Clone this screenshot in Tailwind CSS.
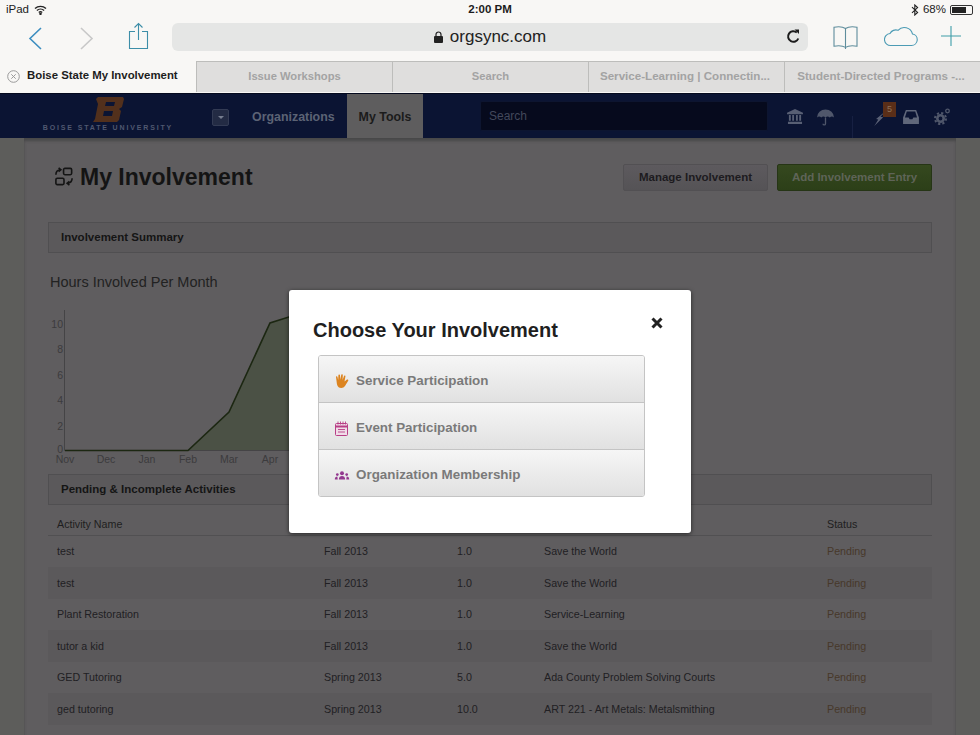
<!DOCTYPE html>
<html lang="en">
<head>
  <meta charset="UTF-8">
  <title>Boise State My Involvement</title>
  <script src="https://cdn.jsdelivr.net/npm/@tailwindcss/browser@4"></script>
</head>
<body class="relative w-[980px] h-[735px] overflow-hidden bg-[#5d5d5b] font-['Liberation_Sans',Arial,sans-serif]">

  <!-- status bar -->
  <div class="h-[20px] bg-[#f8f7f5] flex items-center justify-between px-[6px] text-[11.5px] text-[#1c1c1c]">
    <div class="flex items-center gap-[5px] w-[200px]">
      <span>iPad</span>
      <svg width="13" height="10" viewBox="0 0 13 10" fill="none" stroke="#222" stroke-width="1.4"><path d="M1 3.6a8 8 0 0 1 11 0M2.9 5.6a5.2 5.2 0 0 1 7.2 0M4.8 7.4a2.5 2.5 0 0 1 3.4 0"/><circle cx="6.5" cy="8.8" r=".6" fill="#222"/></svg>
    </div>
    <span class="font-semibold">2:00 PM</span>
    <div class="flex items-center justify-end gap-[4px] w-[200px]">
      <svg width="8" height="12" viewBox="0 0 8 12" fill="none" stroke="#222" stroke-width="1.1"><path d="M1 3.2 6.6 8.4 3.8 11V1l2.8 2.6L1 8.8"/></svg>
      <span>68%</span>
      <div class="w-[23px] h-[10px] rounded-[2px] border border-[#333] p-[1px] mr-[1px]"><div class="w-[14px] h-full bg-[#222]"></div></div>
    </div>
  </div>

  <!-- safari toolbar -->
  <div class="h-[41px] bg-[#f8f7f5] flex items-center relative">
    <div class="w-[172px] shrink-0 relative h-full">
      <svg class="absolute left-[27px] top-[6px]" width="16" height="24" viewBox="0 0 16 24" fill="none" stroke="#3d8ec0" stroke-width="1.6"><path d="M14 2 3 12.5 14 23"/></svg>
      <svg class="absolute left-[79px] top-[6px]" width="16" height="24" viewBox="0 0 16 24" fill="none" stroke="#c8c8c8" stroke-width="1.6"><path d="M2 2l11 10.5L2 23"/></svg>
      <svg class="absolute left-[128px] top-[2px]" width="21" height="28" viewBox="0 0 21 28" fill="none" stroke="#3d8ea8" stroke-width="1.1"><path d="M7 9.500H1.500v17h18v-17H14M10.500 18V1.500M6.500 5.500l4-4 4 4"/></svg>
    </div>
    <div class="w-[636px] h-[28px] -mt-[7px] rounded-[6px] bg-[#e5e6e5] flex items-center justify-center relative text-[17px] text-[#222]">
      <svg class="mr-[7px]" width="9" height="12" viewBox="0 0 9 12"><path d="M2 5V3.500a2.500 2.500 0 0 1 5 0V5" fill="none" stroke="#222" stroke-width="1.200"/><rect y="5" width="9" height="7" rx="1" fill="#222"/></svg>
      <span>orgsync.com</span>
      <svg class="absolute right-[7px] top-[6px]" width="15" height="15" viewBox="0 0 15 15" fill="none" stroke="#1c1c1c" stroke-width="2"><path d="M12.300 9.500A5.300 5.300 0 1 1 10.800 3.500"/><path d="M8.500 .5h4.500v4.500z" fill="#1c1c1c" stroke="none"/></svg>
    </div>
    <div class="flex-1 relative h-full">
      <svg class="absolute left-[25px] top-[5px]" width="25" height="25" viewBox="0 0 25 25" fill="none" stroke="#5e8d9c" stroke-width="1.100"><path d="M12.500 3.500C10 1.800 5 1.500 1 2.200v19c4-.6 9-.4 11.500 1.200 2.500-1.600 7.500-1.800 11.500-1.200v-19c-4-.7-9-.4-11.500 1.300zM12.500 3.500V24"/></svg>
      <svg class="absolute left-[76px] top-[5px]" width="34" height="22" viewBox="0 0 34 22" fill="none" stroke="#4c9bb4" stroke-width="1.100"><path d="M8 20.500H7a6 6 0 0 1-1-12 6.500 6.500 0 0 1 8-3.200A8.500 8.500 0 0 1 28.500 9a5.800 5.800 0 0 1-1 11.500z"/></svg>
      <svg class="absolute left-[132px] top-[5px]" width="22" height="22" viewBox="0 0 22 22" fill="none" stroke="#3f9ea8" stroke-width="1.100"><path d="M11 1v20M1 11h20"/></svg>
    </div>
  </div>

  <!-- tab strip -->
  <div class="h-[32px] flex pb-[1px] bg-[#f8f7f5] text-[11.2px] font-semibold text-[#a3a3a3]">
    <div class="w-[196px] pb-[1px] flex items-center pl-[7px] gap-[7px] text-[11.4px] text-[#1d1d1d]">
      <svg width="13" height="13" viewBox="0 0 13 13" fill="none" stroke="#9a9a9a"><circle cx="6.500" cy="6.500" r="5.800"/><path d="M4.300 4.300l4.400 4.400M8.700 4.300l-4.400 4.400"/></svg>
      <span>Boise State My Involvement</span>
    </div>
    <div class="w-[196px] pb-[2px] bg-[#dfdedd] border-t border-l border-[#bdbdbb] flex items-center justify-center">Issue Workshops</div>
    <div class="w-[196px] pb-[2px] bg-[#dfdedd] border-t border-l border-[#bdbdbb] flex items-center justify-center">Search</div>
    <div class="w-[196px] pb-[2px] pr-[3px] text-[11.600px] bg-[#dfdedd] border-t border-l border-[#bdbdbb] flex items-center justify-center">Service-Learning | Connectin...</div>
    <div class="flex-1 pb-[2px] pr-[3px] text-[11.600px] bg-[#dfdedd] border-t border-l border-[#bdbdbb] flex items-center justify-center">Student-Directed Programs -...</div>
  </div>

  <!-- orgsync nav -->
  <div class="h-[45px] bg-[#0b1433] border-t border-[#050a1e] flex items-stretch">
    <div class="w-[212px] shrink-0 flex flex-col items-center pt-[2px] pl-[4px]">
      <svg width="33" height="26" viewBox="0 0 33 26"><path fill-rule="evenodd" fill="#52301c" d="M6 1h25l1 2-2 8-3 2 2 2-2 9-2 2H1l2-3 3-15-2-5zM14 6l-1 4h9l1-4zM12 15l-1 5h9l1-5z"/></svg>
      <span class="text-[7px] font-bold tracking-[1.850px] text-[#505870] whitespace-nowrap mt-[1px]">BOISE STATE UNIVERSITY</span>
    </div>
    <div class="self-center w-[17px] h-[17px] rounded-[2px] bg-[#232b44] border border-[#333b54] flex items-center justify-center mt-[3px]">
      <div class="w-0 h-0 border-x-[3px] border-x-transparent border-t-[3px] border-t-[#777e90]"></div>
    </div>
    <div class="w-[118px] self-center mt-[2px] pl-[23px] text-[12.400px] font-bold text-[#5c6375]">Organizations</div>
    <div class="w-[76px] pt-[2px] bg-[#5e5d5e] flex items-center justify-center text-[12.400px] font-bold text-[#1b1b1b]">My Tools</div>
    <div class="self-center ml-[57px] w-[288px] h-[30px] rounded-[2px] bg-[#060a1d] border border-[#0d1530] text-[12px] text-[#42485b] flex items-center px-[8px]">Search</div>
    <div class="relative flex-1">
      <svg class="absolute left-[19px] top-[15px]" width="16" height="15" viewBox="0 0 17 16" fill="#585f74"><path d="M8.500 0 17 4v1.500H0V4zM2 6.500h2v6H2zM5.500 6.500h2v6h-2zM9.500 6.500h2v6h-2zM13 6.500h2v6h-2zM1 13.500h15V16H1z"/></svg>
      <svg class="absolute left-[49px] top-[15px]" width="17" height="17" viewBox="0 0 18 18" fill="#50576b"><path d="M0 9a9 8.500 0 0 1 18 0c-1.500-1.300-3-1.300-4.500 0-1.500-1.300-3-1.300-4.500 0-1.500-1.300-3-1.300-4.500 0C3 7.700 1.500 7.700 0 9z"/><path d="M8.300 9h1.400v6.500a2 2 0 0 1-4 0h1.400a.6.600 0 0 0 1.200 0z"/></svg>
      <div class="absolute left-[84px] top-[22px] w-px h-[22px] bg-[#172042]"></div>
      <svg class="absolute left-[106px] top-[17px]" width="13" height="15" viewBox="0 0 14 17" fill="#5a6176"><path d="M13 0 7 6.500l3 .5L0 17l4.500-7.500L2 9z"/></svg>
      <div class="absolute left-[115px] top-[8px] w-[13px] h-[15px] bg-[#5a2e18] text-[#8c7056] text-[9px] text-center leading-[15px]">5</div>
      <svg class="absolute left-[135px] top-[16px]" width="16" height="14" viewBox="0 0 17 15" fill="#60677a"><path fill-rule="evenodd" d="M3 0h11l3 8v7H0V8zM4 1.500 2 8h4l1 2h3l1-2h4l-2-6.500z"/></svg>
      <svg class="absolute left-[166px] top-[14px]" width="16" height="17" viewBox="0 0 16 17" fill="none" stroke="#50576b"><circle cx="6.500" cy="10.500" r="3.200" stroke-width="2.600"/><circle cx="6.500" cy="10.500" r="5.500" stroke-width="2" stroke-dasharray="2.200 2.120"/><circle cx="13.500" cy="3" r="1.800" stroke-width="1.300"/></svg>
    </div>
  </div>

  <!-- page under the dimmer -->
  <div class="mx-[24px] h-[597px] bg-[#5f5d5f] shadow-[inset_0_3px_3px_#484849] px-[24px]">
    <div class="h-[84px] flex justify-between pt-[26px]">
      <div class="flex items-start gap-[7px] pl-[7px] text-[23px] leading-[26px] font-bold text-[#141414]">
        <svg class="mt-[3px]" width="18" height="19" viewBox="0 0 20 20" fill="none" stroke="#141414" stroke-width="1.800"><rect x="9.500" y="1" width="9" height="7" rx="1.500"/><rect x="1" y="12" width="9" height="7" rx="1.500"/><path d="M1 8c0-3 1.500-5 4.500-5.500M4 .5l2.500 2L4 4.500M19 12c0 3-1.500 5-4.500 5.500M16 15.500l-2.500 2 2.500 2"/></svg>
        <span>My Involvement</span>
      </div>
      <div class="flex gap-[9px] text-[11.500px] font-bold">
        <div class="w-[145px] h-[27px] rounded-[2px] bg-gradient-to-b from-[#5d5a5e] to-[#555356] border border-[#525053] flex items-center justify-center text-[#1d1b20]">Manage Involvement</div>
        <div class="w-[155px] h-[27px] rounded-[2px] bg-gradient-to-b from-[#35481f] to-[#2c3f18] border border-[#263516] flex items-center justify-center text-[#5f6458]">Add Involvement Entry</div>
      </div>
    </div>

    <div class="h-[31px] pt-[1px] bg-[#5b595b] border border-[#504f51] flex items-center pl-[12px] text-[11.500px] font-bold text-[#151515]">Involvement Summary</div>

    <div class="mt-[21px] ml-[2px] text-[14.500px] leading-[17px] text-[#222222]">Hours Involved Per Month</div>

    <svg class="block mt-[9px] -ml-[48px]" width="300" height="170" viewBox="0 0 300 170" font-family="Liberation Sans, Arial, sans-serif" font-size="10.500" fill="#3c3b3d">
      <path d="M188 150.500 229 112 270 23 311 10V150.500z" fill="#4b5145"/>
      <path d="M64.500 10V150.500H300" fill="none" stroke="#454446"/>
      <path d="M65 150.500H188L229 112 270 23 311 10" fill="none" stroke="#1c2712" stroke-width="1.600"/>
      <text x="63" y="28" text-anchor="end">10</text>
      <text x="63" y="53" text-anchor="end">8</text>
      <text x="63" y="79" text-anchor="end">6</text>
      <text x="63" y="104" text-anchor="end">4</text>
      <text x="63" y="130" text-anchor="end">2</text>
      <text x="63" y="153" text-anchor="end">0</text>
      <text x="65" y="163" text-anchor="middle">Nov</text>
      <text x="106" y="163" text-anchor="middle">Dec</text>
      <text x="147" y="163" text-anchor="middle">Jan</text>
      <text x="188" y="163" text-anchor="middle">Feb</text>
      <text x="229" y="163" text-anchor="middle">Mar</text>
      <text x="270" y="163" text-anchor="middle">Apr</text>
    </svg>

    <div class="mt-[4px] h-[31px] pt-[1px] bg-[#5b595b] border border-[#504f51] flex items-center pl-[12px] text-[11.500px] font-bold text-[#151515]">Pending &amp; Incomplete Activities</div>

    <!-- activities table -->
    <div class="mt-[5px] text-[10.700px] text-[#212023]">
      <div class="grid grid-cols-[267px_133px_87px_283px_1fr] pl-[9px] pt-[3px] h-[26px] items-center border-b border-[#515052] text-[#1e1e1e]">
        <span>Activity Name</span><span></span><span></span><span></span><span>Status</span>
      </div>
      <div class="grid grid-cols-[267px_133px_87px_283px_1fr] pl-[9px] h-[31px] items-center">
        <span>test</span><span>Fall 2013</span><span>1.0</span><span>Save the World</span><span class="text-[#47382a]">Pending</span>
      </div>
      <div class="grid grid-cols-[267px_133px_87px_283px_1fr] pl-[9px] h-[32px] items-center bg-[#5b595b]">
        <span>test</span><span>Fall 2013</span><span>1.0</span><span>Save the World</span><span class="text-[#47382a]">Pending</span>
      </div>
      <div class="grid grid-cols-[267px_133px_87px_283px_1fr] pl-[9px] h-[31px] items-center">
        <span>Plant Restoration</span><span>Fall 2013</span><span>1.0</span><span>Service-Learning</span><span class="text-[#47382a]">Pending</span>
      </div>
      <div class="grid grid-cols-[267px_133px_87px_283px_1fr] pl-[9px] h-[32px] items-center bg-[#5b595b]">
        <span>tutor a kid</span><span>Fall 2013</span><span>1.0</span><span>Save the World</span><span class="text-[#47382a]">Pending</span>
      </div>
      <div class="grid grid-cols-[267px_133px_87px_283px_1fr] pl-[9px] h-[31px] items-center">
        <span>GED Tutoring</span><span>Spring 2013</span><span>5.0</span><span>Ada County Problem Solving Courts</span><span class="text-[#47382a]">Pending</span>
      </div>
      <div class="grid grid-cols-[267px_133px_87px_283px_1fr] pl-[9px] h-[32px] items-center bg-[#5b595b]">
        <span>ged tutoring</span><span>Spring 2013</span><span>10.0</span><span>ART 221 - Art Metals: Metalsmithing</span><span class="text-[#47382a]">Pending</span>
      </div>
    </div>
  </div>

  <!-- modal -->
  <div class="absolute left-[289px] top-[290px] w-[402px] h-[243px] bg-white rounded-[3px] shadow-[0_1px_4px_rgba(0,0,0,0.6)]">
    <div class="flex justify-between pl-[24px] pr-[28px] pt-[28px]">
      <h2 class="text-[20px] leading-[24px] font-bold text-[#1f1f1f]">Choose Your Involvement</h2>
      <svg class="-mt-[1px]" width="12" height="12" viewBox="0 0 12 12" stroke="#222" stroke-width="3"><path d="M1.500 1.500l9 9M10.500 1.500l-9 9"/></svg>
    </div>
    <div class="mt-[13px] ml-[29px] w-[327px] rounded-[3px] border border-[#c4c4c4] text-[13.400px] font-bold text-[#7a7a7a] overflow-hidden">
      <div class="h-[47px] pt-[4px] bg-gradient-to-b from-[#f6f6f6] to-[#e1e1e1] border-b border-[#c4c4c4] flex items-center pl-[15px] gap-[7px]">
        <svg width="15" height="14" viewBox="0 0 15 14" fill="#dc8420"><path d="M2.600 7.500 2 3a.7.7 0 0 1 1.400-.2L4.200 6 4.400 1.200a.8.8 0 0 1 1.600 0L6.400 5.800 7.200.9a.8.8 0 0 1 1.600.2L8.600 6 10 2a.7.7 0 0 1 1.400.4L10.500 7.500 13 5.600c.8-.6 1.700.3 1.200 1.100L11 12c-1 1.300-2 2-3.800 2-3.600 0-4.300-3-4.600-6.500z"/></svg>
        <span>Service Participation</span>
      </div>
      <div class="h-[47px] pt-[4px] bg-gradient-to-b from-[#f6f6f6] to-[#e1e1e1] border-b border-[#c4c4c4] flex items-center pl-[16px] gap-[8px]">
        <svg width="13" height="15" viewBox="0 0 13 15" fill="none" stroke="#b83f86"><rect x=".5" y="2.500" width="12" height="12" rx="1" fill="#f0dce8"/><path d="M.5 5.500h12" stroke-width="2"/><path d="M3 .5v3M5.500 .5v3M8 .5v3M10.500 .5v3M3 8.500h7M3 11h7" stroke-width=".9"/></svg>
        <span>Event Participation</span>
      </div>
      <div class="h-[46px] pt-[4px] bg-gradient-to-b from-[#f6f6f6] to-[#e1e1e1] flex items-center pl-[15px] gap-[6px]">
        <svg width="16" height="9" viewBox="0 0 16 10" fill="#93398f"><circle cx="8" cy="2.500" r="2.200"/><path d="M4.500 9.500c0-3 1.500-4 3.500-4s3.500 1 3.500 4z"/><circle cx="2.800" cy="4" r="1.500"/><path d="M0 9.500c0-2.500 1-3.500 2.800-3.500l.5 3.500z"/><circle cx="13.200" cy="4" r="1.500"/><path d="M16 9.500c0-2.500-1-3.500-2.800-3.500l-.5 3.500z"/></svg>
        <span>Organization Membership</span>
      </div>
    </div>
  </div>

</body>
</html>
